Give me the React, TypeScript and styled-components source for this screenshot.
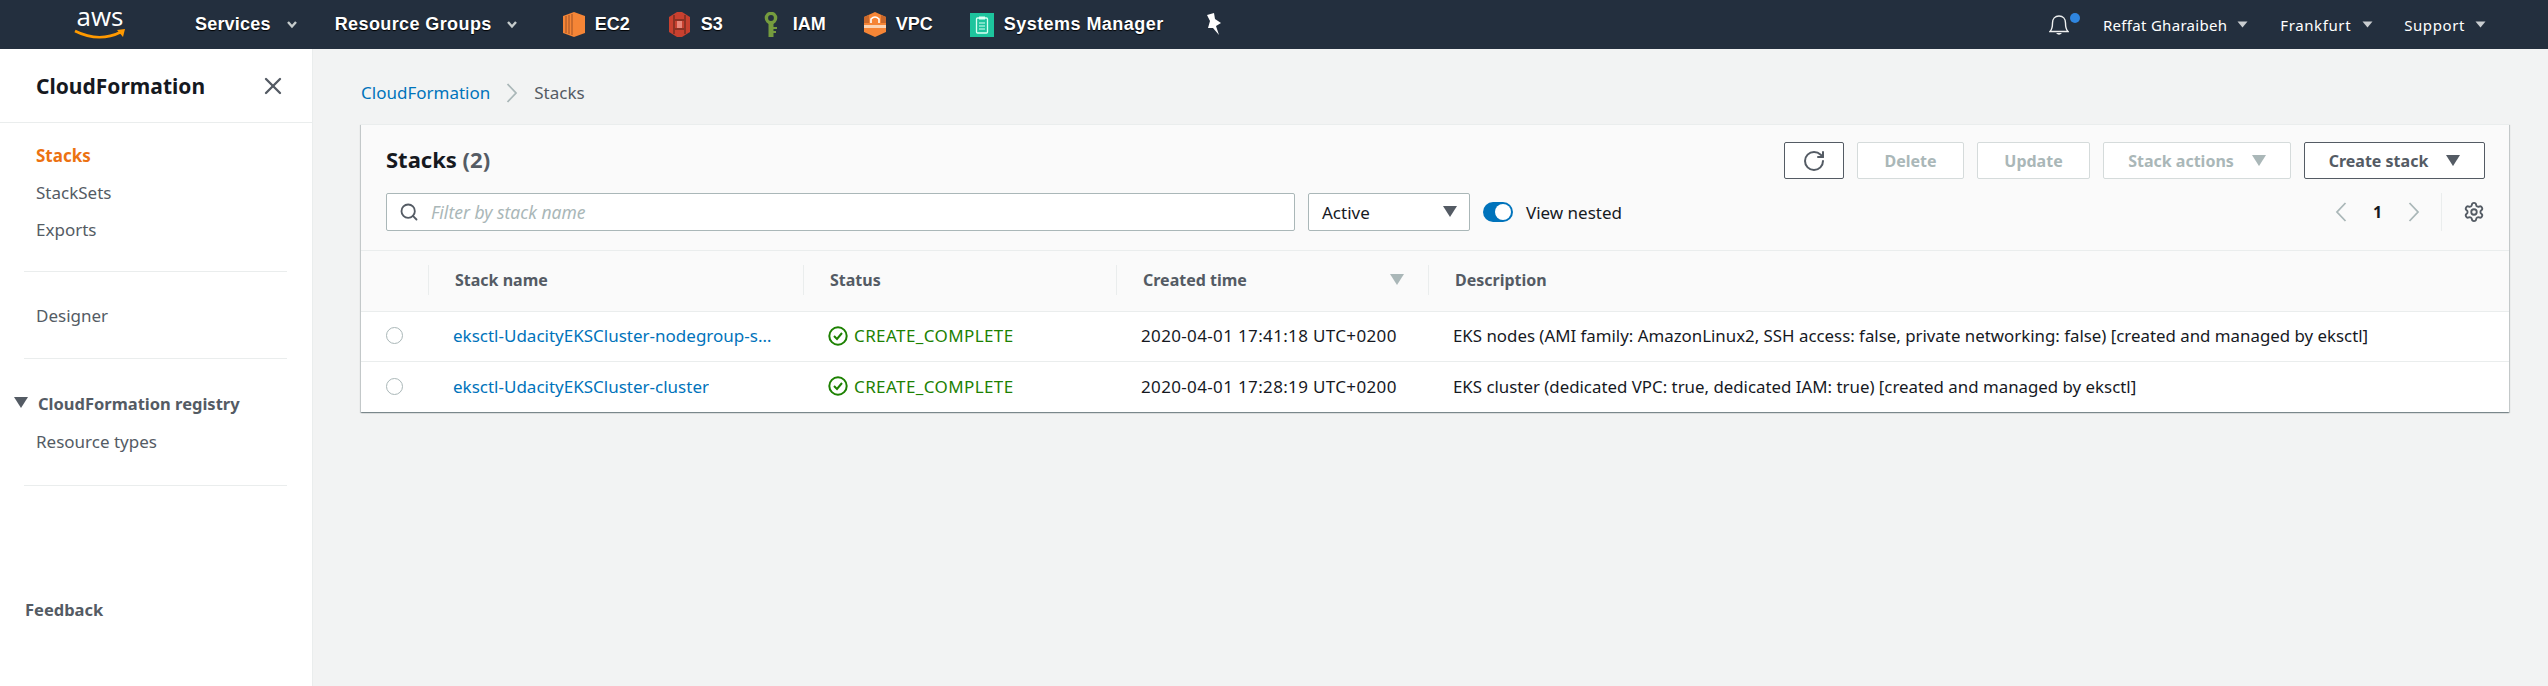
import React from "react";
import styled, { createGlobalStyle } from "styled-components";
import { RotateCw, Settings, Search, X } from "lucide-react";

const Global = createGlobalStyle`
  html, body { margin: 0; padding: 0; background: #f2f3f3; }
  body { font-family: "Noto Sans", "Liberation Sans", sans-serif; color: #16191f; }
  * { box-sizing: border-box; }
`;

const Page = styled.div`
  width: 2548px;
  height: 686px;
  display: flex;
  flex-direction: column;
  overflow: hidden;
`;
const TopBar = styled.header`
  height: 49px;
  flex: none;
  background: #232f3e;
  display: flex;
  align-items: center;
  padding-left: 74px;
  padding-right: 62px;
`;
const Logo = styled.div`
  width: 52px;
  height: 38px;
  display: flex;
  flex-direction: column;
  align-items: center;
  margin-right: 69px;
  margin-top: -6px;
`;
const LogoWord = styled.span`
  font-family: "Open Sans", sans-serif;
  font-size: 26px;
  line-height: 26px;
  color: #fff;
`;
const NavMenu = styled.div<{ $gap: number }>`
  display: flex;
  align-items: center;
  margin-right: ${(p) => p.$gap}px;
`;
const NavLabel = styled.span<{ $ls?: number }>`
  font-family: "Liberation Sans", Arial, sans-serif;
  font-weight: 700;
  font-size: 18px;
  letter-spacing: ${(p) => p.$ls ?? 0}px;
  color: #fff;
  text-shadow: 0 1px 1px #000;
  white-space: nowrap;
`;
const Shortcut = styled.div<{ $gap: number; $iconGap: number }>`
  display: flex;
  align-items: center;
  gap: ${(p) => p.$iconGap}px;
  margin-right: ${(p) => p.$gap}px;
`;
const NavSpacer = styled.div`
  flex: 1;
`;
const UserMenu = styled.div<{ $gap: number; $ls?: number }>`
  display: flex;
  align-items: center;
  margin-right: ${(p) => p.$gap}px;
  color: #fff;
  font-size: 15px;
  letter-spacing: ${(p) => p.$ls ?? 0}px;
  white-space: nowrap;
`;
const Caret = styled.svg<{ $ml: number }>`
  margin-left: ${(p) => p.$ml}px;
  flex: none;
`;
const BellWrap = styled.div`
  position: relative;
  width: 20px;
  height: 22px;
  margin-right: 34px;
`;
const BellDot = styled.span`
  position: absolute;
  left: 21px;
  top: -1px;
  width: 10px;
  height: 10px;
  border-radius: 50%;
  background: #2f86e0;
`;
const Body = styled.div`
  flex: 1;
  display: flex;
  min-height: 0;
`;
const Sidebar = styled.aside`
  width: 313px;
  flex: none;
  background: #fff;
  border-right: 1px solid #eaeded;
  display: flex;
  flex-direction: column;
`;
const SideHead = styled.div`
  height: 74px;
  border-bottom: 1px solid #eaeded;
  padding: 0 25px 0 36px;
  display: flex;
  align-items: center;
  justify-content: space-between;
  flex: none;
`;
const SideTitle = styled.h2`
  margin: 0;
  font-size: 21px;
  font-weight: 700;
  color: #16191f;
`;
const SideList = styled.nav<{ $pt: number; $h: number }>`
  height: ${(p) => p.$h}px;
  padding-top: ${(p) => p.$pt}px;
  display: flex;
  flex-direction: column;
  margin: 0 25px 0 24px;
  border-bottom: 1px solid #eaeded;
  flex: none;
`;
const SideLink = styled.a<{ $active?: boolean }>`
  height: 37px;
  line-height: 37px;
  padding-left: 12px;
  font-size: 17px;
  font-weight: ${(p) => (p.$active ? 700 : 400)};
  color: ${(p) => (p.$active ? "#ec7211" : "#545b64")};
`;
const SideGroup = styled.div`
  display: flex;
  align-items: center;
  height: 40px;
  margin-left: -10px;
  gap: 10px;
  font-size: 16.5px;
  font-weight: 700;
  color: #545b64;
`;
const Feedback = styled.div`
  margin: 112px 0 0 25px;
  font-size: 16.5px;
  font-weight: 700;
  color: #545b64;
`;
const Main = styled.main`
  flex: 1;
  padding: 0 39px 0 48px;
  min-width: 0;
`;
const Crumbs = styled.div`
  height: 75px;
  padding-top: 12px;
  display: flex;
  align-items: center;
  gap: 16px;
  font-size: 17px;
  color: #545b64;
`;
const CrumbLink = styled.a`
  color: #0073bb;
`;
const Card = styled.section`
  background: #fff;
  box-shadow: 0 1px 1px 0 rgba(0, 28, 36, 0.3), 1px 1px 1px 0 rgba(0, 28, 36, 0.15), -1px 1px 1px 0 rgba(0, 28, 36, 0.15);
  border-top: 1px solid #eaeded;
`;
const CardHead = styled.div`
  height: 126px;
  background: #fafafa;
  border-bottom: 1px solid #eaeded;
  padding: 17px 24px 0 25px;
  display: flex;
  flex-direction: column;
  gap: 14px;
`;
const HeadRow = styled.div`
  display: flex;
  align-items: center;
  justify-content: space-between;
`;
const CardTitle = styled.h1`
  margin: -3px 0 0;
  font-size: 22px;
  font-weight: 700;
  color: #16191f;
`;
const Count = styled.span`
  font-weight: 700;
  color: #545b64;
`;
const Actions = styled.div`
  display: flex;
  gap: 13px;
`;
const Button = styled.button<{ $w: number; $disabled?: boolean }>`
  width: ${(p) => p.$w}px;
  height: 37px;
  padding: 0;
  display: flex;
  align-items: center;
  justify-content: center;
  gap: 18px;
  border-radius: 2px;
  background: #fff;
  border: 1px solid ${(p) => (p.$disabled ? "#d5dbdb" : "#545b64")};
  color: ${(p) => (p.$disabled ? "#aab7b8" : "#545b64")};
  font-family: inherit;
  font-size: 16px;
  font-weight: 700;
`;
const Filters = styled.div`
  display: flex;
  align-items: center;
  gap: 13px;
`;
const SearchBox = styled.div`
  width: 909px;
  height: 38px;
  background: #fff;
  border: 1px solid #aab7b8;
  border-radius: 2px;
  display: flex;
  align-items: center;
  padding-left: 12px;
  gap: 12px;
  color: #545b64;
`;
const Placeholder = styled.span`
  font-style: italic;
  font-size: 17.5px;
  color: #aab7b8;
`;
const SelectBox = styled.div`
  width: 162px;
  height: 38px;
  background: #fff;
  border: 1px solid #aab7b8;
  border-radius: 2px;
  display: flex;
  align-items: center;
  justify-content: space-between;
  padding: 0 12px 0 13px;
  font-size: 17px;
`;
const Toggle = styled.span`
  width: 30px;
  height: 20px;
  border-radius: 10px;
  background: #0073bb;
  position: relative;
  display: block;
  &::after {
    content: "";
    position: absolute;
    right: 2px;
    top: 2px;
    width: 16px;
    height: 16px;
    border-radius: 50%;
    background: #fff;
  }
`;
const ToggleLabel = styled.span`
  font-size: 17px;
`;
const Pager = styled.div`
  display: flex;
  align-items: center;
  height: 38px;
`;
const PageNum = styled.span`
  width: 61px;
  text-align: center;
  font-size: 16px;
  font-weight: 700;
  color: #16191f;
`;
const PagerDivider = styled.span`
  width: 1px;
  height: 38px;
  background: #eaeded;
  margin: 0 21px 0 21px;
`;
const Row = styled.div<{ $head?: boolean; $h: number; $line?: boolean }>`
  display: grid;
  grid-template-columns: 67px 375px 313px 312px 1fr;
  height: ${(p) => p.$h}px;
  align-items: center;
  background: ${(p) => (p.$head ? "#fafafa" : "#fff")};
  border-bottom: ${(p) => (p.$line ? "1px solid #eaeded" : "none")};
`;
const HeadCell = styled.div<{ $sep?: boolean }>`
  height: 30px;
  margin-top: -2px;
  display: flex;
  align-items: center;
  justify-content: space-between;
  padding: 0 24px 0 26px;
  font-size: 16px;
  font-weight: 700;
  color: #545b64;
  border-left: ${(p) => (p.$sep ? "1px solid #eaeded" : "none")};
`;
const Cell = styled.div`
  display: flex;
  align-items: center;
  gap: 6px;
  margin-top: -2px;
  padding: 0 28px 0 25px;
  font-size: 17px;
  white-space: nowrap;
  min-width: 0;
`;
const RadioCell = styled.div`
  display: flex;
  justify-content: center;
`;
const Radio = styled.span`
  width: 17px;
  height: 17px;
  border-radius: 50%;
  border: 1px solid #aab7b8;
  background: #fff;
  margin-top: -2px;
`;
const StackLink = styled.a`
  color: #0073bb;
  overflow: hidden;
  text-overflow: ellipsis;
`;
const StatusText = styled.span`
  color: #1d8102;
  letter-spacing: 0.4px;
`;
const TimeText = styled.span`
  letter-spacing: 0.35px;
`;
const DescText = styled.span`
  font-size: 16.85px;
`;

const Chevron = ({ ml = 0 }: { ml?: number }) => (
  <Caret $ml={ml} width="12" height="9" viewBox="0 0 12 9">
    <path d="M2 2 L6 6.5 L10 2" fill="none" stroke="#c5cbcb" strokeWidth="2.4" />
  </Caret>
);
const MiniCaret = ({ ml }: { ml: number }) => (
  <Caret $ml={ml} width="11" height="7" viewBox="0 0 11 7">
    <path d="M0.5 0.5 H10.5 L5.5 6.5 Z" fill="#c9cdd0" />
  </Caret>
);
const Tri = ({ color, size = 14 }: { color: string; size?: number }) => (
  <svg width={size} height={size * 0.8} viewBox="0 0 14 11" style={{ flex: "none" }}>
    <path d="M0 0 H14 L7 11 Z" fill={color} />
  </svg>
);
const Angle = ({ left }: { left?: boolean }) => (
  <svg width="12" height="20" viewBox="0 0 12 20" fill="none" style={{ flex: "none" }}>
    <path d={left ? "M10.5 1 L2 10 L10.5 19" : "M1.5 1 L10 10 L1.5 19"} stroke="#aab7b8" strokeWidth="1.8" />
  </svg>
);

const Ec2Icon = () => (
  <svg width="22" height="25" viewBox="0 0 22 25">
    <path d="M11 0 L22 4 V21 L11 25 Z" fill="#f58536" />
    <path d="M0 4 L11 0 V25 L0 21 Z" fill="#f58536" />
    <path d="M3 4 V21 M6 3 V22 M9 2 V23" stroke="#9d5025" strokeWidth="1" />
  </svg>
);
const S3Icon = () => (
  <svg width="21" height="25" viewBox="0 0 21 25">
    <path d="M8 0 L13 0 L21 5 V20 L13 25 H8 L0 20 V5 Z" fill="#c8402f" />
    <path d="M5 3 V22 M16 3 V22 M5 8 H16 M5 17 H16" stroke="#8c3123" strokeWidth="2" />
    <rect x="8" y="9" width="5" height="7" fill="#e8867a" />
  </svg>
);
const IamIcon = () => (
  <svg width="15" height="25" viewBox="0 0 15 25">
    <circle cx="7" cy="6" r="4.6" fill="none" stroke="#759c3e" strokeWidth="3.4" />
    <path d="M4.5 11 H9.5 V25 H4.5 Z" fill="#759c3e" />
    <path d="M9 15 H13 V17 H9 Z M9 19 H12 V21 H9 Z" fill="#759c3e" />
  </svg>
);
const VpcIcon = () => (
  <svg width="22" height="25" viewBox="0 0 22 25">
    <path d="M11 0 L22 5 V20 L11 25 L0 20 V5 Z" fill="#f58536" />
    <path d="M0 5 L5 3 V11 H0 Z M17 3 L22 5 V11 H17 Z" fill="#c9682b" />
    <path d="M7 11 V7 Q11 3 15 7 V11" fill="none" stroke="#fff" strokeWidth="1.6" />
    <rect x="0" y="13" width="22" height="3" fill="#fbd4b4" />
  </svg>
);
const SsmIcon = () => (
  <svg width="24" height="24" viewBox="0 0 24 24">
    <rect width="24" height="24" fill="#1dc49d" />
    <rect x="6.5" y="5" width="11" height="15" rx="1" fill="none" stroke="#d9fff3" strokeWidth="1.3" />
    <rect x="9" y="3.5" width="6" height="3" fill="#d9fff3" />
    <path d="M9 10 H15 M9 13 H15 M9 16 H15" stroke="#d9fff3" />
  </svg>
);
const PinIcon = () => (
  <svg width="17" height="23" viewBox="0 0 17 23">
    <path d="M2 2 L9 0 L10 6 L16 10 L11 13 L14 22 L8 15 L3 15 L5 8 Z" fill="#fff" />
  </svg>
);
const BellIcon = () => (
  <svg width="20" height="22" viewBox="0 0 20 22" fill="none">
    <path d="M1 17.5 C3.5 15 3.5 12 3.5 9 C3.5 5 6 2 10 2 C14 2 16.5 5 16.5 9 C16.5 12 16.5 15 19 17.5 Z" stroke="#eef0f0" strokeWidth="1.4" />
    <path d="M7 19 Q10 22.5 13 19 Z" fill="#eef0f0" />
  </svg>
);
const StatusIcon = () => (
  <svg width="20" height="20" viewBox="0 0 20 20" fill="none" style={{ flex: "none" }}>
    <circle cx="10" cy="10" r="8.7" stroke="#1d8102" strokeWidth="2" />
    <path d="M6 10 L9 13 L14 7" stroke="#1d8102" strokeWidth="2" />
  </svg>
);

const rows = [
  { name: "eksctl-UdacityEKSCluster-nodegroup-standard-workers", time: "2020-04-01 17:41:18 UTC+0200", desc: "EKS nodes (AMI family: AmazonLinux2, SSH access: false, private networking: false) [created and managed by eksctl]", h: 50, line: true },
  { name: "eksctl-UdacityEKSCluster-cluster", time: "2020-04-01 17:28:19 UTC+0200", desc: "EKS cluster (dedicated VPC: true, dedicated IAM: true) [created and managed by eksctl]", h: 50, line: false },
];

export default function App() {
  return (
    <Page>
      <Global />
      <TopBar>
        <Logo>
          <LogoWord>aws</LogoWord>
          <svg width="52" height="12" viewBox="0 0 52 12">
            <path d="M1 2 Q25 14 47 3" fill="none" stroke="#f90" strokeWidth="2.6" />
            <path d="M43 1 L51 0 L49 8 Z" fill="#f90" />
          </svg>
        </Logo>
        <NavMenu $gap={37}><NavLabel $ls={0.2}>Services</NavLabel><Chevron ml={15} /></NavMenu>
        <NavMenu $gap={45}><NavLabel $ls={0.4}>Resource Groups</NavLabel><Chevron ml={14} /></NavMenu>
        <Shortcut $gap={39} $iconGap={10}><Ec2Icon /><NavLabel>EC2</NavLabel></Shortcut>
        <Shortcut $gap={41} $iconGap={11}><S3Icon /><NavLabel>S3</NavLabel></Shortcut>
        <Shortcut $gap={38} $iconGap={14}><IamIcon /><NavLabel>IAM</NavLabel></Shortcut>
        <Shortcut $gap={37} $iconGap={10}><VpcIcon /><NavLabel>VPC</NavLabel></Shortcut>
        <Shortcut $gap={41} $iconGap={10}><SsmIcon /><NavLabel $ls={0.45}>Systems Manager</NavLabel></Shortcut>
        <PinIcon />
        <NavSpacer />
        <BellWrap><BellIcon /><BellDot /></BellWrap>
        <UserMenu $gap={32} $ls={0.3}>Reffat Gharaibeh<MiniCaret ml={10} /></UserMenu>
        <UserMenu $gap={31} $ls={0.6}>Frankfurt<MiniCaret ml={11} /></UserMenu>
        <UserMenu $gap={0} $ls={0.6}>Support<MiniCaret ml={10} /></UserMenu>
      </TopBar>
      <Body>
        <Sidebar>
          <SideHead>
            <SideTitle>CloudFormation</SideTitle>
            <X size={28} color="#545b64" strokeWidth={2} />
          </SideHead>
          <SideList $pt={14} $h={149}>
            <SideLink $active>Stacks</SideLink>
            <SideLink>StackSets</SideLink>
            <SideLink>Exports</SideLink>
          </SideList>
          <SideList $pt={25} $h={87}>
            <SideLink>Designer</SideLink>
          </SideList>
          <SideList $pt={24} $h={127}>
            <SideGroup><Tri color="#545b64" />CloudFormation registry</SideGroup>
            <SideLink>Resource types</SideLink>
          </SideList>
          <Feedback>Feedback</Feedback>
        </Sidebar>
        <Main>
          <Crumbs>
            <CrumbLink>CloudFormation</CrumbLink>
            <Angle />
            <span>Stacks</span>
          </Crumbs>
          <Card>
            <CardHead>
              <HeadRow>
                <CardTitle>Stacks <Count>(2)</Count></CardTitle>
                <Actions>
                  <Button $w={60}><RotateCw size={24} color="#545b64" strokeWidth={2} /></Button>
                  <Button $w={107} $disabled>Delete</Button>
                  <Button $w={113} $disabled>Update</Button>
                  <Button $w={188} $disabled>Stack actions<Tri color="#aab7b8" /></Button>
                  <Button $w={181}>Create stack<Tri color="#545b64" /></Button>
                </Actions>
              </HeadRow>
              <HeadRow>
                <Filters>
                  <SearchBox><Search size={20} strokeWidth={2.2} /><Placeholder>Filter by stack name</Placeholder></SearchBox>
                  <SelectBox>Active<Tri color="#545b64" /></SelectBox>
                  <Toggle />
                  <ToggleLabel>View nested</ToggleLabel>
                </Filters>
                <Pager>
                  <Angle left />
                  <PageNum>1</PageNum>
                  <Angle />
                  <PagerDivider />
                  <Settings size={22} color="#545b64" strokeWidth={2} />
                </Pager>
              </HeadRow>
            </CardHead>
            <Row $head $h={61} $line>
              <div />
              <HeadCell $sep>Stack name</HeadCell>
              <HeadCell $sep>Status</HeadCell>
              <HeadCell $sep>Created time<Tri color="#aab7b8" /></HeadCell>
              <HeadCell $sep>Description</HeadCell>
            </Row>
            {rows.map((r) => (
              <Row key={r.name} $h={r.h} $line={r.line}>
                <RadioCell><Radio /></RadioCell>
                <Cell><StackLink>{r.name}</StackLink></Cell>
                <Cell><StatusIcon /><StatusText>CREATE_COMPLETE</StatusText></Cell>
                <Cell><TimeText>{r.time}</TimeText></Cell>
                <Cell><DescText>{r.desc}</DescText></Cell>
              </Row>
            ))}
          </Card>
        </Main>
      </Body>
    </Page>
  );
}
